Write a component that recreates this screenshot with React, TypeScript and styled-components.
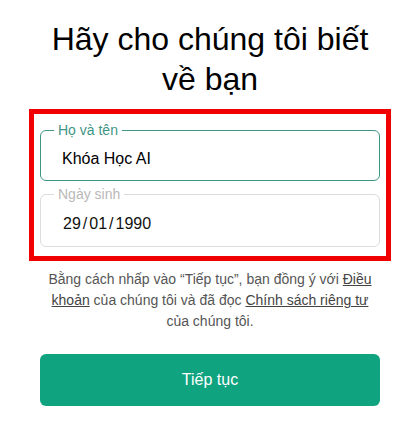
import React, { useState } from "react";
import styled, { createGlobalStyle } from "styled-components";

const GlobalStyle = createGlobalStyle`
  html, body {
    margin: 0;
    padding: 0;
    background: #ffffff;
  }
  body {
    font-family: "Liberation Sans", Arial, sans-serif;
    color: #000000;
  }
`;

const Page = styled.div`
  display: flex;
  flex-direction: column;
  align-items: center;
  padding: 19px 0 20px;
`;

const Title = styled.h1`
  margin: 0;
  width: 340px;
  font-size: 32px;
  line-height: 40px;
  font-weight: 400;
  text-align: center;
  color: #000000;
`;

const FormBox = styled.div`
  box-sizing: border-box;
  width: 362px;
  margin-top: 10px;
  padding: 8px 6px 9px;
  border: 5px solid #f00000;
  display: flex;
  flex-direction: column;
  gap: 5px;
`;

const Field = styled.fieldset<{ $active?: boolean }>`
  margin: 0;
  padding: 0;
  min-width: 0;
  border: 1px solid ${(p) => (p.$active ? "#3f9585" : "#dcdcdc")};
  border-radius: 6px;
`;

const Legend = styled.legend<{ $active?: boolean }>`
  margin-left: 13px;
  padding: 0 4px;
  font-size: 14px;
  line-height: 16px;
  color: ${(p) => (p.$active ? "#3f9585" : "#b9b9b9")};
`;

const TextInput = styled.input`
  box-sizing: border-box;
  display: block;
  width: 100%;
  height: 42px;
  margin: 0;
  padding: 0 0 0 21px;
  border: none;
  outline: none;
  background: transparent;
  font-family: "Liberation Sans", Arial, sans-serif;
  font-size: 16px;
  color: #000000;
`;

const DateValue = styled.div`
  box-sizing: border-box;
  height: 44px;
  padding-left: 22px;
  display: flex;
  align-items: center;
  font-size: 16px;
  color: #111111;
`;

const Slash = styled.span`
  margin: 0 2px;
`;

const Terms = styled.p`
  margin: 8px 0 0;
  width: 340px;
  font-size: 14px;
  line-height: 21px;
  text-align: center;
  color: #555555;
`;

const TermsLink = styled.a`
  color: #444444;
  text-decoration: underline;
  cursor: pointer;
`;

const ContinueButton = styled.button`
  box-sizing: border-box;
  width: 340px;
  height: 52px;
  margin-top: 22px;
  border: none;
  border-radius: 6px;
  background: #10a37f;
  color: #ffffff;
  font-family: "Liberation Sans", Arial, sans-serif;
  font-size: 16px;
  cursor: pointer;
`;

const App: React.FC = () => {
  const [name, setName] = useState<string>("Khóa Học AI");
  const date = ["29", "01", "1990"];

  return (
    <>
      <GlobalStyle />
      <Page>
        <Title>Hãy cho chúng tôi biết về bạn</Title>
        <FormBox>
          <Field $active>
            <Legend $active>Họ và tên</Legend>
            <TextInput value={name} onChange={(e) => setName(e.target.value)} />
          </Field>
          <Field>
            <Legend>Ngày sinh</Legend>
            <DateValue>
              {date.map((part, i) => (
                <React.Fragment key={part}>
                  {i > 0 && <Slash>/</Slash>}
                  <span>{part}</span>
                </React.Fragment>
              ))}
            </DateValue>
          </Field>
        </FormBox>
        <Terms>
          Bằng cách nhấp vào “Tiếp tục”, bạn đồng ý với <TermsLink>Điều khoản</TermsLink> của
          chúng tôi và đã đọc <TermsLink>Chính sách riêng tư</TermsLink> của chúng tôi.
        </Terms>
        <ContinueButton>Tiếp tục</ContinueButton>
      </Page>
    </>
  );
};

export default App;
